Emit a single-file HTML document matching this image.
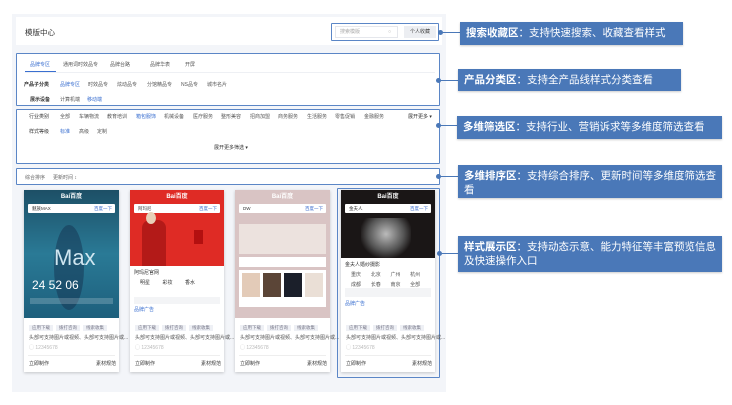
<!DOCTYPE html>
<html><head><meta charset="utf-8"><style>
*{margin:0;padding:0;box-sizing:border-box}
body{width:732px;height:405px;background:#fff;position:relative;overflow:hidden;font-family:"Liberation Sans","Noto Sans CJK SC",sans-serif;color:#333}
.a{position:absolute}
.panel{left:12px;top:14px;width:434px;height:378px;background:#f3f5f9}
.w{background:#fff}
.ol{border:1.5px solid #5b86c6;border-radius:1px}
.t{font-size:5px;white-space:nowrap;color:#555;line-height:6px}
.lab{background:#4a78b8;color:#fff;font-size:10.5px;font-weight:bold;padding:4px 6px;line-height:14px;box-shadow:0 1px 2px rgba(0,0,0,.2)}
.lab span{font-weight:normal}
.ln{height:1px;background:#4a78b8}
.dot{width:5px;height:5px;border-radius:50%;background:#4a78b8}
.card{background:#fff;box-shadow:0 1px 3px rgba(0,0,0,.2)}
.tr{font-size:0;line-height:0;white-space:nowrap}
.tag{display:inline-block;background:#eef0f5;color:#778;font-size:4.5px;line-height:6px;padding:0 3px;margin-right:3px}
.sb{position:absolute;left:4px;right:4px;top:14px;height:9px;background:#fff;border-radius:1px;font-size:4.5px;line-height:5px;color:#333;padding:2px 4px}
.sb b{position:absolute;right:3px;top:2px;color:#36c;font-weight:normal}
.logo{position:absolute;top:4px;left:0;right:0;text-align:center;color:#fff;font-size:6px;line-height:7px;font-weight:bold}
</style></head><body>
<div class="a panel"></div>
<div class="a w" style="left:16px;top:17px;width:426px;height:28px"></div>
<div class="a" style="left:25px;top:27px;font-size:7.5px;color:#333">模版中心</div>
<div class="a ol" style="left:331px;top:23px;width:108px;height:18px"></div>
<div class="a w" style="left:335px;top:26px;width:63px;height:12px;border:1px solid #e5e7ec"></div>
<div class="a t" style="left:340px;top:29px;color:#aaa">搜索模版</div>
<div class="a t" style="left:388px;top:29px;color:#aaa">○</div>
<div class="a" style="left:404px;top:26px;width:32px;height:12px;background:#eceef2"></div>
<div class="a t" style="left:410px;top:29px;color:#444">个人收藏</div>

<div class="a w ol" style="left:16px;top:53px;width:424px;height:53px"></div>
<div class="a t" style="left:30px;top:62px;color:#3a6fd0">品牌专区</div>
<div class="a" style="left:25px;top:71px;width:31px;height:1px;background:#3a6fd0"></div>
<div class="a" style="left:25px;top:72px;width:410px;height:1px;background:#eef0f4"></div>
<div class="a t" style="left:63px;top:62px">通用词时效品专</div>
<div class="a t" style="left:110px;top:62px">品牌台路</div>
<div class="a t" style="left:150px;top:62px">品牌华表</div>
<div class="a t" style="left:185px;top:62px">开屏</div>
<div class="a t" style="left:24px;top:82px;color:#333;font-weight:bold">产品子分类</div>
<div class="a t" style="left:60px;top:82px;color:#3a6fd0">品牌专区</div>
<div class="a t" style="left:88px;top:82px">时效品专</div>
<div class="a t" style="left:117px;top:82px">炫动品专</div>
<div class="a t" style="left:147px;top:82px">分馆精品专</div>
<div class="a t" style="left:181px;top:82px">NS品专</div>
<div class="a t" style="left:207px;top:82px">城市名片</div>
<div class="a t" style="left:30px;top:97px;color:#333;font-weight:bold">展示设备</div>
<div class="a t" style="left:60px;top:97px">计算机端</div>
<div class="a t" style="left:87px;top:97px;color:#3a6fd0">移动端</div>

<div class="a w ol" style="left:16px;top:109px;width:424px;height:55px"></div>
<div class="a t" style="left:29px;top:114px;color:#333">行业类别</div>
<div class="a t" style="left:60px;top:114px">全部</div>
<div class="a t" style="left:79px;top:114px">车辆物流</div>
<div class="a t" style="left:107px;top:114px">教育培训</div>
<div class="a t" style="left:136px;top:114px;color:#3a6fd0">箱包服饰</div>
<div class="a t" style="left:164px;top:114px">机械设备</div>
<div class="a t" style="left:193px;top:114px">医疗服务</div>
<div class="a t" style="left:221px;top:114px">整形美容</div>
<div class="a t" style="left:250px;top:114px">招商加盟</div>
<div class="a t" style="left:278px;top:114px">商务服务</div>
<div class="a t" style="left:307px;top:114px">生活服务</div>
<div class="a t" style="left:335px;top:114px">零售促销</div>
<div class="a t" style="left:364px;top:114px">金融服务</div>
<div class="a t" style="left:408px;top:114px;color:#333">展开更多 ▾</div>
<div class="a t" style="left:29px;top:129px;color:#333">样式等级</div>
<div class="a t" style="left:60px;top:129px;color:#3a6fd0">标准</div>
<div class="a t" style="left:79px;top:129px">高级</div>
<div class="a t" style="left:97px;top:129px">定制</div>
<div class="a t" style="left:214px;top:145px;color:#333">展开更多筛选 ▾</div>

<div class="a w ol" style="left:16px;top:168px;width:424px;height:17px"></div>
<div class="a t" style="left:25px;top:175px;color:#666">综合排序</div>
<div class="a t" style="left:53px;top:175px;color:#666">更新时间 ↕</div>

<!-- card 1 -->
<div class="a card" style="left:24px;top:190px;width:95px;height:182px">
 <div class="a" style="left:0;top:0;width:95px;height:128px;background:linear-gradient(180deg,#1d4f66,#2a7a96 50%,#1d5f7c)">
  <div class="logo">Bai百度</div>
  <div class="sb">魅族MAX<b>百度一下</b></div>
  <div class="a" style="left:30px;top:35px;width:30px;height:85px;border-radius:50%;background:rgba(20,50,80,.5)"></div>
  <div class="a" style="left:30px;top:56px;color:#cfe6f0;font-size:22px;line-height:24px;font-weight:100">Max</div>
  <div class="a" style="left:8px;top:88px;color:#fff;font-size:12px;line-height:14px">24 52 06</div>
  <div class="a" style="left:6px;top:108px;width:83px;height:6px;background:rgba(255,255,255,.2)"></div>
 </div>
</div>
<!-- card 2 -->
<div class="a card" style="left:130px;top:190px;width:94px;height:182px">
 <div class="a" style="left:0;top:0;width:94px;height:76px;background:#df2b25">
  <div class="logo">Bai百度</div>
  <div class="sb">阿玛尼<b>百度一下</b></div>
  <div class="a" style="left:12px;top:30px;width:24px;height:46px;background:#b31a18;border-radius:8px 8px 0 0"></div>
  <div class="a" style="left:16px;top:22px;width:10px;height:12px;background:#e8d0b8;border-radius:50%"></div>
  <div class="a" style="left:64px;top:40px;width:9px;height:14px;background:#b31010"></div>
 </div>
 <div class="a t" style="left:4px;top:80px;color:#333">阿玛尼官网</div>
 <div class="a t" style="left:10px;top:90px;color:#333">明星 &nbsp; &nbsp; &nbsp; &nbsp; 彩妆 &nbsp; &nbsp; &nbsp; &nbsp; 香水</div>
 <div class="a" style="left:4px;top:107px;width:86px;height:7px;background:#f3f4f6"></div>
 <div class="a t" style="left:4px;top:117px;color:#3a6fd0">品牌广告</div>
</div>
<!-- card 3 -->
<div class="a card" style="left:235px;top:190px;width:95px;height:182px">
 <div class="a" style="left:0;top:0;width:95px;height:128px;background:#d9c4c4">
  <div class="logo">Bai百度</div>
  <div class="sb">DW<b>百度一下</b></div>
  <div class="a" style="left:4px;top:34px;width:87px;height:30px;background:#ece2de"></div>
  <div class="a" style="left:4px;top:67px;width:87px;height:10px;background:#fff"></div>
  <div class="a" style="left:4px;top:80px;width:87px;height:37px;background:#fff"></div>
  <div class="a" style="left:7px;top:83px;width:18px;height:24px;background:#e3cbb8"></div>
  <div class="a" style="left:28px;top:83px;width:18px;height:24px;background:#5b4537"></div>
  <div class="a" style="left:49px;top:83px;width:18px;height:24px;background:#1b1f2a"></div>
  <div class="a" style="left:70px;top:83px;width:18px;height:24px;background:#eadfd6"></div>
 </div>
</div>
<!-- card 4 -->
<div class="a card" style="left:341px;top:190px;width:94px;height:182px">
 <div class="a" style="left:0;top:0;width:94px;height:68px;background:#1a1616">
  <div class="logo">Bai百度</div>
  <div class="sb">金夫人<b>百度一下</b></div>
  <div class="a" style="left:20px;top:28px;width:50px;height:40px;background:radial-gradient(ellipse at 50% 40%,#bbb,#555 50%,#1a1616 75%)"></div>
 </div>
 <div class="a t" style="left:4px;top:72px;color:#333">金夫人婚纱摄影</div>
 <div class="a t" style="left:10px;top:82px">重庆 &nbsp; &nbsp; &nbsp; 北京 &nbsp; &nbsp; &nbsp; 广州 &nbsp; &nbsp; &nbsp; 杭州</div>
 <div class="a t" style="left:10px;top:92px">成都 &nbsp; &nbsp; &nbsp; 长春 &nbsp; &nbsp; &nbsp; 南京 &nbsp; &nbsp; &nbsp; 全部</div>
 <div class="a" style="left:4px;top:98px;width:86px;height:9px;background:#f3f4f6"></div>
 <div class="a t" style="left:4px;top:111px;color:#3a6fd0">品牌广告</div>
</div>
<div class="a ol" style="left:337px;top:188px;width:103px;height:190px"></div>

<!-- card bottoms -->
<div class="a tr" style="left:29px;top:325px"><span class="tag">应用下载</span><span class="tag">拨打咨询</span><span class="tag">线索收集</span></div>
<div class="a tr" style="left:135px;top:325px"><span class="tag">应用下载</span><span class="tag">拨打咨询</span><span class="tag">线索收集</span></div>
<div class="a tr" style="left:240px;top:325px"><span class="tag">应用下载</span><span class="tag">拨打咨询</span><span class="tag">线索收集</span></div>
<div class="a tr" style="left:346px;top:325px"><span class="tag">应用下载</span><span class="tag">拨打咨询</span><span class="tag">线索收集</span></div>
<div class="a t" style="left:29px;top:335px">头部可支持图片或视频、头部可支持图片或...</div>
<div class="a t" style="left:135px;top:335px">头部可支持图片或视频、头部可支持图片或...</div>
<div class="a t" style="left:240px;top:335px">头部可支持图片或视频、头部可支持图片或...</div>
<div class="a t" style="left:346px;top:335px">头部可支持图片或视频、头部可支持图片或...</div>
<div class="a t" style="left:29px;top:345px;color:#bbb">◯ 12345678</div>
<div class="a t" style="left:135px;top:345px;color:#bbb">◯ 12345678</div>
<div class="a t" style="left:240px;top:345px;color:#bbb">◯ 12345678</div>
<div class="a t" style="left:346px;top:345px;color:#bbb">◯ 12345678</div>
<div class="a" style="left:28px;top:355px;width:87px;height:1px;background:#eee"></div>
<div class="a" style="left:134px;top:355px;width:86px;height:1px;background:#eee"></div>
<div class="a" style="left:239px;top:355px;width:87px;height:1px;background:#eee"></div>
<div class="a" style="left:345px;top:355px;width:86px;height:1px;background:#eee"></div>
<div class="a t" style="left:29px;top:361px;color:#333">立即制作</div><div class="a t" style="left:96px;top:361px;color:#333">素材规范</div>
<div class="a t" style="left:135px;top:361px;color:#333">立即制作</div><div class="a t" style="left:201px;top:361px;color:#333">素材规范</div>
<div class="a t" style="left:240px;top:361px;color:#333">立即制作</div><div class="a t" style="left:307px;top:361px;color:#333">素材规范</div>
<div class="a t" style="left:346px;top:361px;color:#333">立即制作</div><div class="a t" style="left:412px;top:361px;color:#333">素材规范</div>

<!-- connectors -->
<div class="a dot" style="left:438px;top:30px"></div><div class="a ln" style="left:440px;top:32px;width:20px"></div>
<div class="a dot" style="left:436px;top:78px"></div><div class="a ln" style="left:438px;top:80px;width:20px"></div>
<div class="a dot" style="left:436px;top:123px"></div><div class="a ln" style="left:438px;top:125px;width:19px"></div>
<div class="a dot" style="left:436px;top:174px"></div><div class="a ln" style="left:438px;top:176px;width:20px"></div>
<div class="a dot" style="left:437px;top:251px"></div><div class="a ln" style="left:440px;top:253px;width:18px"></div>

<div class="a lab" style="left:460px;top:22px;width:223px;height:23px">搜索收藏区<span>：支持快速搜索、收藏查看样式</span></div>
<div class="a lab" style="left:458px;top:69px;width:223px;height:22px">产品分类区<span>：支持全产品线样式分类查看</span></div>
<div class="a lab" style="left:457px;top:116px;width:265px;height:23px">多维筛选区<span>：支持行业、营销诉求等多维度筛选查看</span></div>
<div class="a lab" style="left:458px;top:165px;width:264px;height:33px">多维排序区<span>：支持综合排序、更新时间等多维度筛选查看</span></div>
<div class="a lab" style="left:458px;top:236px;width:264px;height:36px">样式展示区<span>：支持动态示意、能力特征等丰富预览信息及快速操作入口</span></div>
</body></html>
